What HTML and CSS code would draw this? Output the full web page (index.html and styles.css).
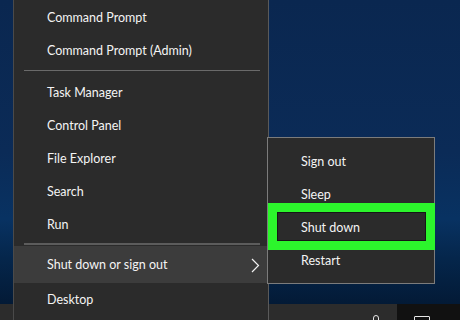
FILE: index.html
```html
<!DOCTYPE html>
<html lang="en">
<head>
    <meta charset="UTF-8">
    <title>Quick link menu</title>
    <link rel="stylesheet" href="styles.css">
</head>
<body>
    <div class="screen">
        <div class="desktop"></div>
        <div class="taskbar">
            <div class="taskbar__apps">
                <span class="tray-icon tray-icon--people"></span>
            </div>
            <div class="taskbar__corner">
                <span class="tray-icon tray-icon--action"></span>
            </div>
        </div>

        <ul class="menu">
            <li class="menu__item">Command Prompt</li>
            <li class="menu__item">Command Prompt (Admin)</li>
            <li class="menu__sep"></li>
            <li class="menu__item">Task Manager</li>
            <li class="menu__item">Control Panel</li>
            <li class="menu__item">File Explorer</li>
            <li class="menu__item">Search</li>
            <li class="menu__item">Run</li>
            <li class="menu__sep menu__sep--low"></li>
            <li class="menu__item menu__item--open">
                <span>Shut down or sign out</span>
                <svg class="menu__arrow" width="9" height="15" viewBox="0 0 9 15">
                    <path d="M1 1 L7.5 7.5 L1 14" fill="none" stroke="#f2f2f2" stroke-width="1.2"/>
                </svg>
            </li>
            <li class="menu__item">Desktop</li>
        </ul>

        <ul class="submenu">
            <li class="menu__item">Sign out</li>
            <li class="menu__item">Sleep</li>
            <li class="menu__item">Shut down</li>
            <li class="menu__item">Restart</li>
            <li class="callout"></li>
        </ul>
    </div>
</body>
</html>
```
FILE: styles.css
```css
* {
    box-sizing: border-box;
}
html, body {
    margin: 0;
    padding: 0;
}
body {
    font: 12.5px/1 Lato, "Noto Sans", sans-serif;
    color: #f4f4f4;
}
.screen {
    position: relative;
    width: 460px;
    height: 320px;
    overflow: hidden;
    display: flex;
    flex-direction: column;
}
.desktop {
    flex: 1;
    background: linear-gradient(180deg, #0a2750 0%, #0b2b57 50%, #083262 72%, #05264b 85%, #031a36 100%);
}
.taskbar {
    height: 16px;
    display: flex;
}
.taskbar__apps {
    flex: 1;
    background: #2c2c2c;
    position: relative;
}
.taskbar__corner {
    width: 63px;
    background: #111;
    position: relative;
}
.tray-icon {
    position: absolute;
    border: 1px solid #e6e6e6;
}
.tray-icon--people {
    left: 373px;
    top: 11px;
    width: 6px;
    height: 8px;
    border-radius: 3px;
}
.tray-icon--action {
    left: 17px;
    top: 12px;
    width: 16px;
    height: 8px;
    border-radius: 1px;
}

/* win+x menu */
.menu,
.submenu {
    list-style: none;
    margin: 0;
    background: #2b2b2b;
}
.menu {
    position: absolute;
    left: 13px;
    top: 0;
    width: 256px;
    height: 330px;
    padding: 1px 0 0;
    border-left: 1px solid #4a4a4a;
    border-right: 1px solid #5a5a5a;
}
.menu__item {
    height: 33px;
    line-height: 33px;
    padding-left: 33px;
    white-space: nowrap;
}
.menu__sep {
    height: 1px;
    margin: 3px 8px 5px 10px;
    background: #6a6a6a;
}
.menu__sep--low {
    margin: 2px 8px 1px 10px;
    height: 2px;
    background: #5c5c5c;
}
.menu__item--open {
    height: 37px;
    line-height: 37px;
    display: flex;
    align-items: center;
    padding-right: 8px;
    background: #3c3c3c;
}
.menu__arrow {
    margin-left: auto;
    margin-top: 2px;
}

.submenu {
    position: absolute;
    left: 267px;
    top: 137px;
    width: 168px;
    padding: 7px 0 6px;
    border: 1px solid #7c7c7c;
}
.callout {
    position: absolute;
    left: 0;
    right: -1px;
    top: 65px;
    height: 47px;
    border: 9px solid #2cf52c;
    box-shadow: inset 0 0 0 1px #161616;
}
```
